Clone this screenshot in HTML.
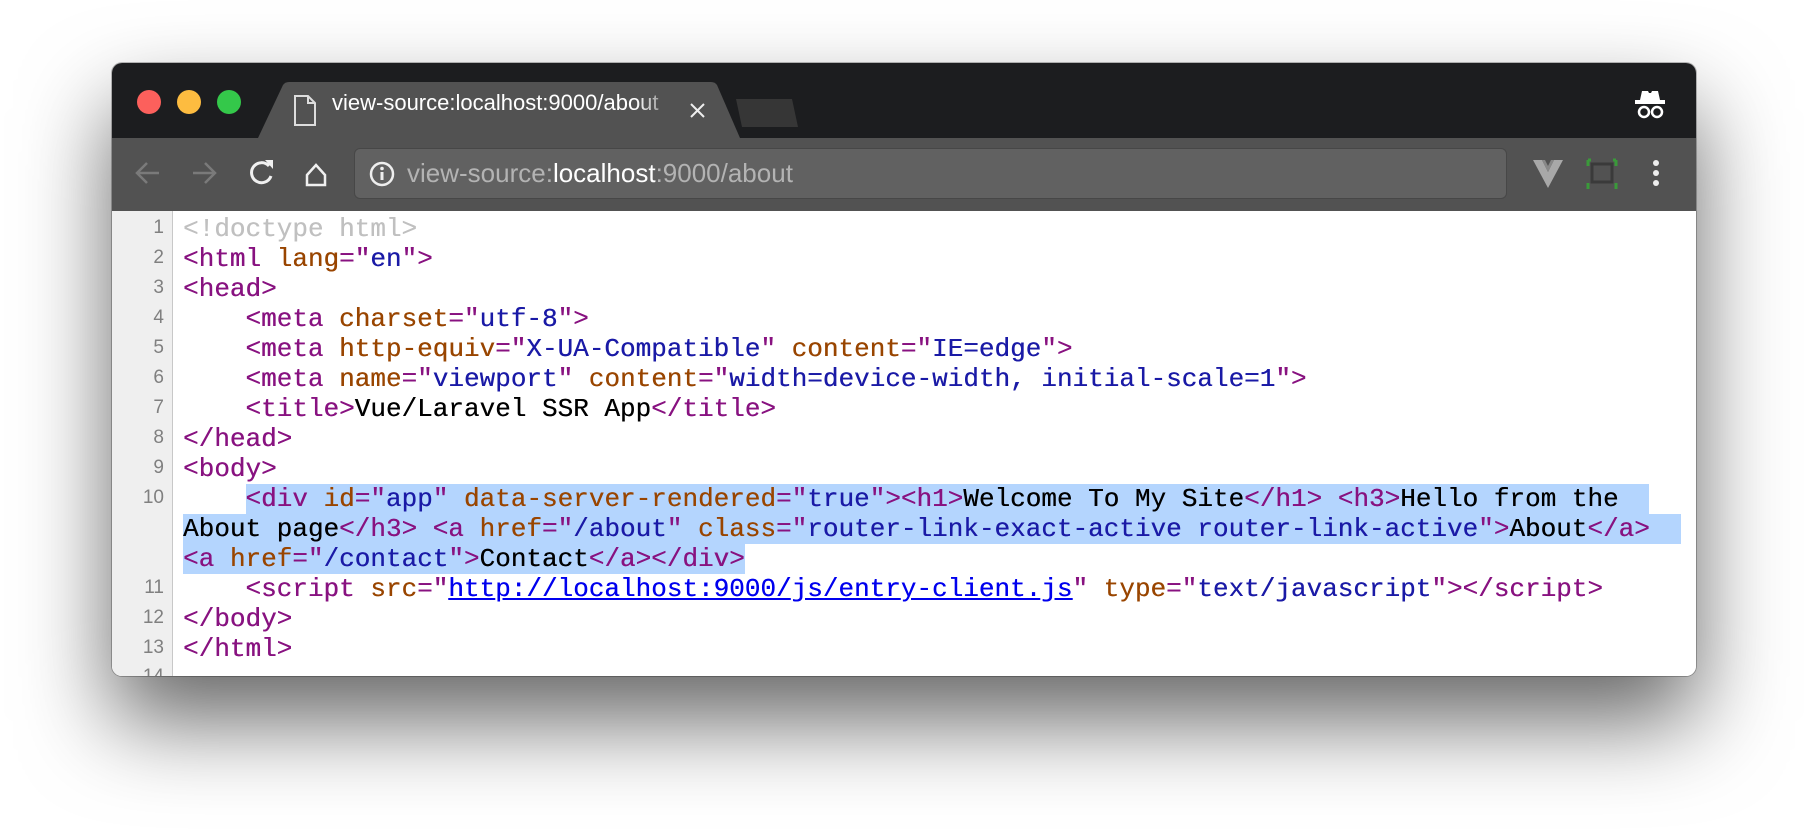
<!DOCTYPE html>
<html><head><meta charset="utf-8"><style>
html,body{margin:0;padding:0;width:1808px;height:836px;overflow:hidden;background:#fff;}
.win{position:absolute;left:112px;top:63px;width:1584px;height:613px;border-radius:10px;overflow:hidden;background:#fff;
box-shadow:0 45px 90px rgba(0,0,0,.6),0 0 0 1px rgba(0,0,0,.25);}
.titlebar{position:absolute;left:0;top:0;width:100%;height:75px;background:#1c1d1f;}
.light{position:absolute;top:27px;width:24px;height:24px;border-radius:50%;}
.toolbar{position:absolute;left:0;top:75px;width:100%;height:73px;background:#525252;}
.omni{position:absolute;left:242px;top:10px;width:1153px;height:51px;background:#616161;border:1px solid #474747;border-radius:6px;box-sizing:border-box;}
.url{position:absolute;left:52px;top:9px;font:26px "Liberation Sans",sans-serif;color:#b3b3b3;white-space:pre;}
.content{position:absolute;left:0;top:148px;width:100%;height:465px;overflow:hidden;background:#fff;}
.gutter{position:absolute;left:0;top:0;width:60px;height:100%;background:#efefef;border-right:1px solid #c8c8c8;}
.row{position:absolute;left:71px;height:30px;line-height:30px;font:26px "Liberation Mono",monospace;white-space:pre;color:#000;text-shadow:0.3px 0 0 currentColor;}
.num{position:absolute;left:0;width:52px;text-align:right;height:30px;line-height:30px;font:19px "Liberation Sans",sans-serif;color:#808080;}
.sel{position:absolute;height:30px;background:#b4d5fe;}
.t{color:#881280}.a{color:#994500}.v{color:#1a1aa6}.d{color:#c0c0c0}.l{color:#0000ee;text-decoration:underline}
</style></head><body>
<div class="win">
 <div class="titlebar">
  <div class="light" style="left:25px;background:#fc605c"></div>
  <div class="light" style="left:65px;background:#fdbc40"></div>
  <div class="light" style="left:105px;background:#34c84a"></div>
  <svg style="position:absolute;left:0;top:0" width="1584" height="75">
   <path d="M146 75 L171 22 Q173 19 177 19 L599 19 Q603 19 605 22 L628 75 Z" fill="#525252"/>
   <path d="M624 36 L680 36 L686 64 L630 64 Z" fill="#363636"/>
   <path d="M183 33 h13 l7 7 v22 h-20 Z M196 33 v7 h7" fill="none" stroke="#ddd" stroke-width="2"/>
   <path d="M579 41 l13 13 M592 41 l-13 13" stroke="#eee" stroke-width="2"/>
   <path d="M1528 37 l2-9 h6 l1 2 h2 l1-2 h6 l2 9 Z" fill="#fff"/>
   <rect x="1523" y="37" width="30" height="4" fill="#fff"/>
   <circle cx="1532" cy="49" r="5" fill="none" stroke="#fff" stroke-width="2.5"/>
   <circle cx="1545" cy="49" r="5" fill="none" stroke="#fff" stroke-width="2.5"/>
  </svg>
  <div style="position:absolute;left:220px;top:27px;font:22px 'Liberation Sans',sans-serif;color:#fff;white-space:pre;width:346px;overflow:hidden;-webkit-mask-image:linear-gradient(90deg,#000 88%,transparent);">view-source:localhost:9000/about</div>
 </div>
 <div class="toolbar">
  <svg style="position:absolute;left:0;top:0" width="1584" height="73">
   <g fill="none" stroke="#7a7a7a" stroke-width="2.5">
    <path d="M25 35 h22 M35 25 l-10 10 l10 10"/>
    <path d="M81 35 h22 M93 25 l10 10 l-10 10"/>
   </g>
   <g fill="none" stroke="#f0f0f0" stroke-width="3">
    <path d="M157 28 A10 10 0 1 0 159 38"/>
    <path d="M195 37 l9-10 l9 10 v10 h-18 Z" stroke-width="2.5"/>
   </g>
   <path d="M153 22 l8 0 l0 9 Z" fill="#f0f0f0"/>
   <path d="M1369 19 l3 9 h9 l-7 6 l3 9 l-8-6 l-8 6 l3-9 l-7-6 h9 Z" fill="none" stroke="#eee" stroke-width="2"/>
   <path d="M1421 22 h9 l6 12 l6-12 h9 l-15 28 Z" fill="#a8a8a8"/>
   <path d="M1430 22 h3 l3 6 l3-6 h3 l-6 12 Z" fill="#888"/>
   <rect x="1480" y="26" width="20" height="18" fill="none" stroke="#3a3a3a" stroke-width="3"/>
   <path d="M1476 22 v6 M1476 22 h3 M1504 22 v6 M1504 22 h-3 M1476 51 v-6 M1504 51 v-6" stroke="#3a9a3a" stroke-width="3"/>
   <circle cx="1544" cy="25" r="3" fill="#eee"/><circle cx="1544" cy="35" r="3" fill="#eee"/><circle cx="1544" cy="45" r="3" fill="#eee"/>
  </svg>
  <div class="omni">
   <svg style="position:absolute;left:14px;top:12px" width="26" height="26"><circle cx="13" cy="13" r="11" fill="none" stroke="#eee" stroke-width="2.5"/><rect x="11.5" y="11" width="3" height="8" fill="#eee"/><circle cx="13" cy="7.5" r="1.8" fill="#eee"/></svg>
   <div class="url">view-source:<span style="color:#fff">localhost</span>:9000/about</div>
  </div>
 </div>
 <div class="content">
  <div class="gutter"></div>
  <div class="sel" style="left:134px;top:273px;width:1403px"></div>
  <div class="sel" style="left:71px;top:303px;width:1498px"></div>
  <div class="sel" style="left:71px;top:333px;width:562px"></div>
  <div class="num" style="top:6px">1</div>
  <div class="num" style="top:36px">2</div>
  <div class="num" style="top:66px">3</div>
  <div class="num" style="top:96px">4</div>
  <div class="num" style="top:126px">5</div>
  <div class="num" style="top:156px">6</div>
  <div class="num" style="top:186px">7</div>
  <div class="num" style="top:216px">8</div>
  <div class="num" style="top:246px">9</div>
  <div class="num" style="top:276px">10</div>
  <div class="num" style="top:366px">11</div>
  <div class="num" style="top:396px">12</div>
  <div class="num" style="top:426px">13</div>
  <div class="num" style="top:455px">14</div>
  <div class="row d" style="top:3px">&lt;!doctype html&gt;</div>
  <div class="row" style="top:33px"><span class="t">&lt;html </span><span class="a">lang</span><span class="t">="</span><span class="v">en</span><span class="t">"&gt;</span></div>
  <div class="row t" style="top:63px">&lt;head&gt;</div>
  <div class="row" style="top:93px">    <span class="t">&lt;meta </span><span class="a">charset</span><span class="t">="</span><span class="v">utf-8</span><span class="t">"&gt;</span></div>
  <div class="row" style="top:123px">    <span class="t">&lt;meta </span><span class="a">http-equiv</span><span class="t">="</span><span class="v">X-UA-Compatible</span><span class="t">" </span><span class="a">content</span><span class="t">="</span><span class="v">IE=edge</span><span class="t">"&gt;</span></div>
  <div class="row" style="top:153px">    <span class="t">&lt;meta </span><span class="a">name</span><span class="t">="</span><span class="v">viewport</span><span class="t">" </span><span class="a">content</span><span class="t">="</span><span class="v">width=device-width, initial-scale=1</span><span class="t">"&gt;</span></div>
  <div class="row" style="top:183px">    <span class="t">&lt;title&gt;</span>Vue/Laravel SSR App<span class="t">&lt;/title&gt;</span></div>
  <div class="row t" style="top:213px">&lt;/head&gt;</div>
  <div class="row t" style="top:243px">&lt;body&gt;</div>
  <div class="row" style="top:273px">    <span class="t">&lt;div </span><span class="a">id</span><span class="t">="</span><span class="v">app</span><span class="t">" </span><span class="a">data-server-rendered</span><span class="t">="</span><span class="v">true</span><span class="t">"&gt;&lt;h1&gt;</span>Welcome To My Site<span class="t">&lt;/h1&gt;</span> <span class="t">&lt;h3&gt;</span>Hello from the</div>
  <div class="row" style="top:303px">About page<span class="t">&lt;/h3&gt;</span> <span class="t">&lt;a </span><span class="a">href</span><span class="t">="</span><span class="v">/about</span><span class="t">" </span><span class="a">class</span><span class="t">="</span><span class="v">router-link-exact-active router-link-active</span><span class="t">"&gt;</span>About<span class="t">&lt;/a&gt;</span></div>
  <div class="row" style="top:333px"><span class="t">&lt;a </span><span class="a">href</span><span class="t">="</span><span class="v">/contact</span><span class="t">"&gt;</span>Contact<span class="t">&lt;/a&gt;&lt;/div&gt;</span></div>
  <div class="row" style="top:363px">    <span class="t">&lt;script </span><span class="a">src</span><span class="t">="</span><span class="l">http://localhost:9000/js/entry-client.js</span><span class="t">" </span><span class="a">type</span><span class="t">="</span><span class="v">text/javascript</span><span class="t">"&gt;&lt;/script&gt;</span></div>
  <div class="row t" style="top:393px">&lt;/body&gt;</div>
  <div class="row t" style="top:423px">&lt;/html&gt;</div>
 </div>
</div>
</body></html>
